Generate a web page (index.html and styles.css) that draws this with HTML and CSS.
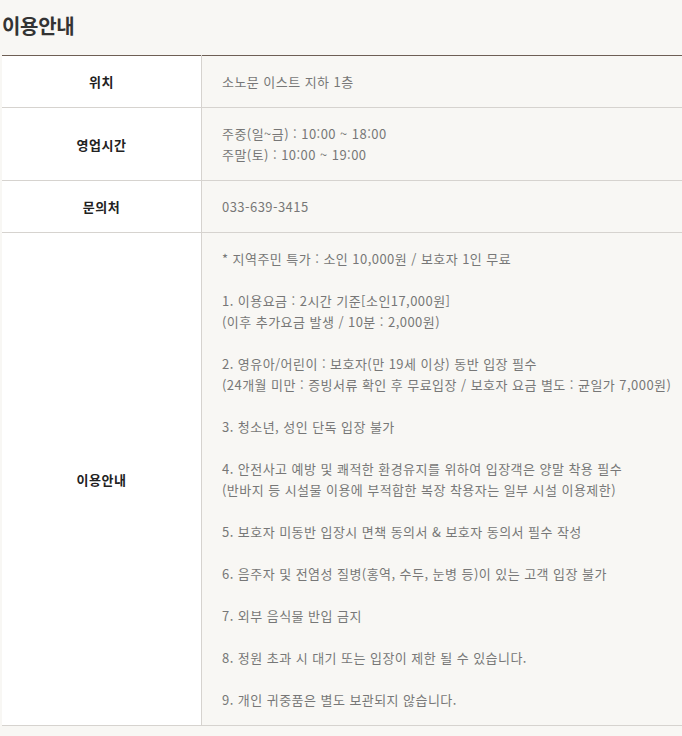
FILE: index.html
```html
<!DOCTYPE html>
<html lang="ko">
<head>
<meta charset="utf-8">
<link rel="stylesheet" href="styles.css">
</head>
<body>
<div class="wrap">
  <h2 class="title">이용안내</h2>
  <table class="info">
    <tr>
      <th>위치</th>
      <td>소노문 이스트 지하 1층</td>
    </tr>
    <tr>
      <th>영업시간</th>
      <td>주중(일~금) : 10:00 ~ 18:00<br>주말(토) : 10:00 ~ 19:00</td>
    </tr>
    <tr>
      <th>문의처</th>
      <td>033-639-3415</td>
    </tr>
    <tr>
      <th>이용안내</th>
      <td>* 지역주민 특가 : 소인 10,000원 / 보호자 1인 무료<br><br>1. 이용요금 : 2시간 기준[소인17,000원]<br>(이후 추가요금 발생 / 10분 : 2,000원)<br><br>2. 영유아/어린이 : 보호자(만 19세 이상) 동반 입장 필수<br>(24개월 미만 : 증빙서류 확인 후 무료입장 / 보호자 요금 별도 : 균일가 7,000원)<br><br>3. 청소년, 성인 단독 입장 불가<br><br>4. 안전사고 예방 및 쾌적한 환경유지를 위하여 입장객은 양말 착용 필수<br>(반바지 등 시설물 이용에 부적합한 복장 착용자는 일부 시설 이용제한)<br><br>5. 보호자 미동반 입장시 면책 동의서 &amp; 보호자 동의서 필수 작성<br><br>6. 음주자 및 전염성 질병(홍역, 수두, 눈병 등)이 있는 고객 입장 불가<br><br>7. 외부 음식물 반입 금지<br><br>8. 정원 초과 시 대기 또는 입장이 제한 될 수 있습니다.<br><br>9. 개인 귀중품은 별도 보관되지 않습니다.</td>
    </tr>
  </table>
</div>
</body>
</html>
```

FILE: styles.css
```css
html, body {
  margin: 0;
  padding: 0;
  background: #f8f7f4;
}
body {
  font-family: "Noto Sans CJK KR", "Noto Sans", sans-serif;
  color: #333;
}
.wrap {
  padding: 12px 0 0 2px;
}
.title {
  margin: 0;
  font-size: 20px;
  line-height: 28px;
  font-weight: 700;
  color: #333;
  letter-spacing: -0.3px;
}
.info {
  margin-top: 15px;
  width: 680px;
  border-collapse: collapse;
  border-top: 1px solid #6e5f55;
  border-bottom: 1px solid #d6d3cf;
}
.info th,
.info td {
  border-top: 1px solid #d6d3cf;
  padding: 15px 0;
  font-size: 13px;
  line-height: 21px;
}
.info tr:first-child th,
.info tr:first-child td {
  border-top: 0;
}
.info th {
  width: 199px;
  background: #fff;
  font-weight: 700;
  color: #222;
  text-align: center;
  vertical-align: middle;
  border-right: 1px solid #d6d3cf;
  letter-spacing: 0.5px;
}
.info td {
  text-align: left;
  padding-left: 20px;
  color: #777;
  letter-spacing: 0.45px;
}
```
